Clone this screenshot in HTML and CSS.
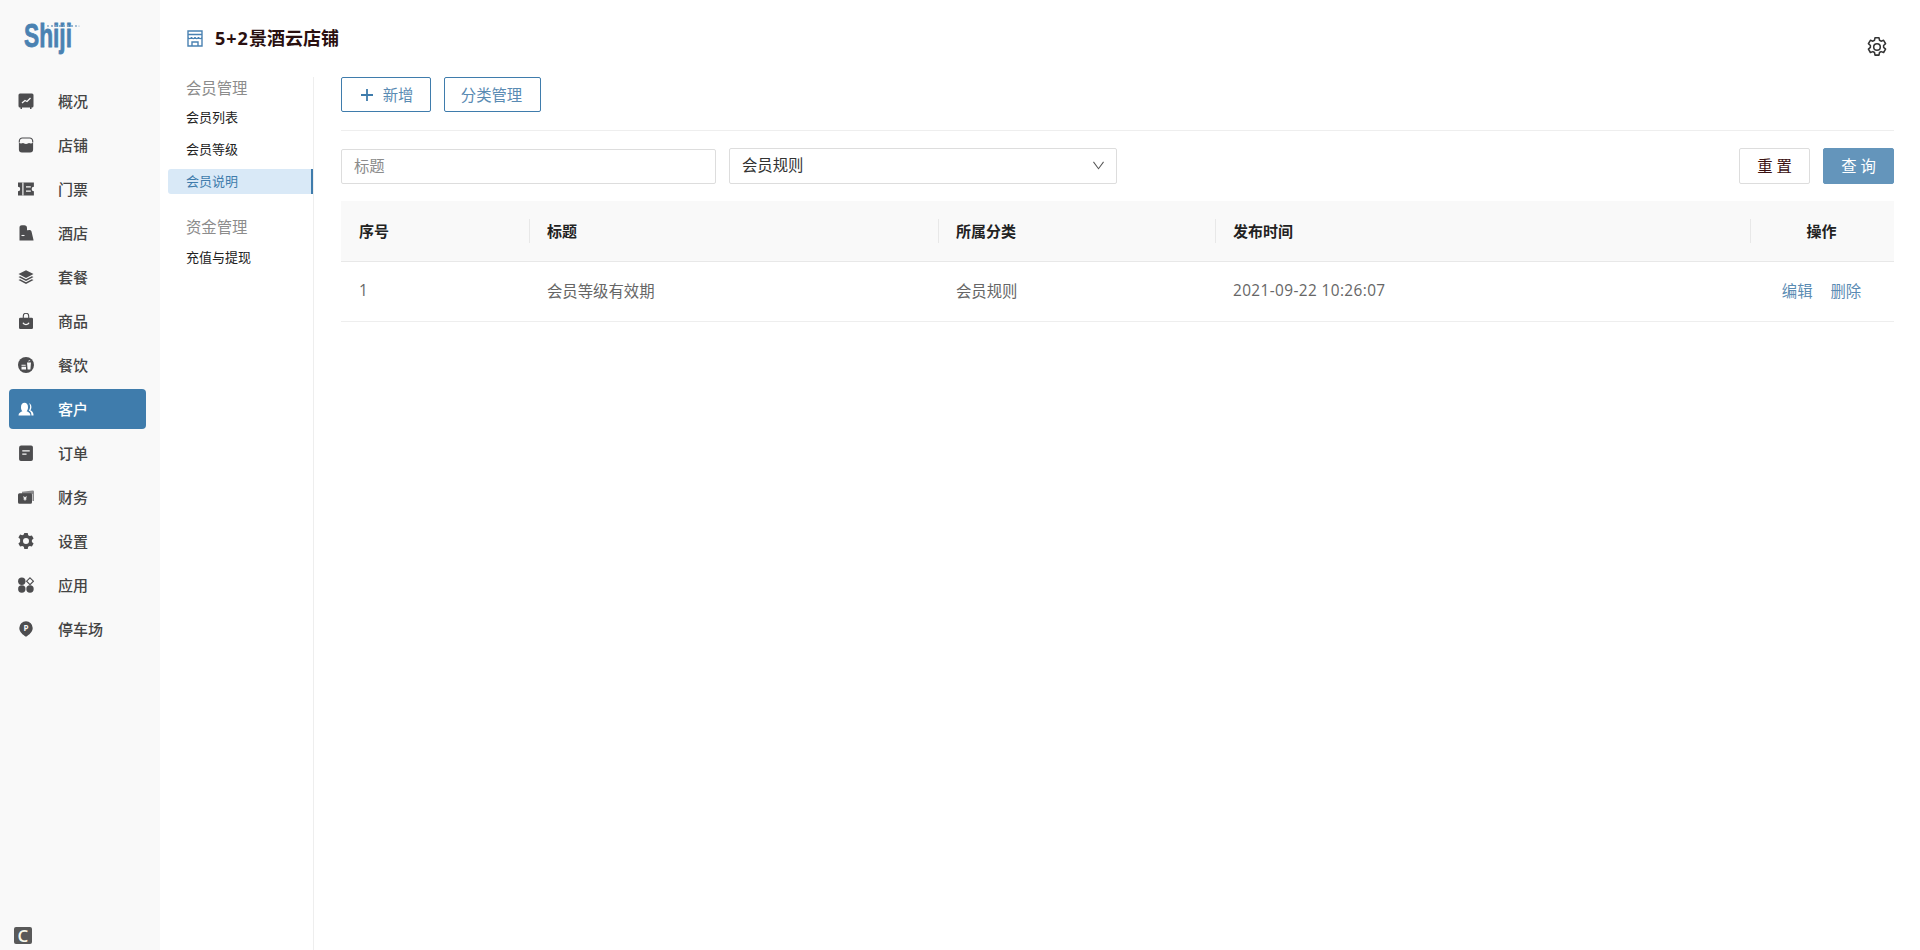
FILE: index.html
```html
<!DOCTYPE html>
<html lang="zh">
<head>
<meta charset="utf-8">
<title>会员说明</title>
<link rel="stylesheet" href="styles.css">
</head>
<body>
<div class="app">
  <aside class="sidebar">
    <div class="logo">
      <svg viewBox="0 0 60 34" width="60" height="34">
        <text class="logo-text" x="0" y="26" textLength="48" lengthAdjust="spacingAndGlyphs">Shiji</text>
        <g class="logo-dots">
          <circle cx="24" cy="5" r=".9"/><circle cx="28" cy="5" r="1.100"/><circle cx="32" cy="5" r="1.100"/><circle cx="36" cy="5" r="1.100"/><circle cx="40" cy="5" r="1.100"/><circle cx="44" cy="5" r="1.100"/><circle cx="48" cy="5" r="1.100"/><circle cx="52" cy="5" r=".9"/><circle cx="55" cy="5" r=".6"/>
        </g>
      </svg>
    </div>
    <nav class="menu">
      <a class="menu-item"><svg class="mi" viewBox="1 .5 15 16"><path d="M2.500 1h12A1.500 1.500 0 0 1 16 2.500v11a1.500 1.500 0 0 1-1.500 1.500H14v1.500h-1.500V15h-8v1.500H3V15h-.5A1.500 1.500 0 0 1 1 13.500v-11A1.500 1.500 0 0 1 2.500 1z"/><path class="cut" d="M4.500 10.500L7.500 8l2 1L13 5.500"/></svg><span>概况</span></a>
      <a class="menu-item"><svg class="mi" viewBox=".5 .5 15 16"><path class="outline" d="M1.300 6V4.500A3 3 0 0 1 4.300 1.500h7.400a3 3 0 0 1 3 3V6"/><path d="M.9 6.300c2.200 1.500 3.300.3 4.100.3.900 0 1.300.9 3 .9s2.100-.9 3-.9c.8 0 1.900 1.200 4.100-.3v6.700a3 3 0 0 1-3 3H3.900a3 3 0 0 1-3-3z"/></svg><span>店铺</span></a>
      <a class="menu-item"><svg class="mi" viewBox="1 1.500 15 13"><path d="M1 2h14.900v3.900a2.100 2.100 0 0 0 0 4.200V14H1v-3.900a2.100 2.100 0 0 0 0-4.200z"/><path class="cut thin" d="M5.600 2v12"/><path class="cut thin" d="M8.500 6h4.500M8.500 10h4.500"/></svg><span>门票</span></a>
      <a class="menu-item"><svg class="mi" viewBox="1 1 15 16"><path d="M2 16.500V3.500C2 2 3 1.300 4.300 1.300h2.400C8.500 1.300 9.500 2.300 9.500 4v2.300h.5L12 6c1 0 1.500.5 2 1.500l2 8.500v.5z"/><path class="cut thin" d="M4 11.500h3"/></svg><span>酒店</span></a>
      <a class="menu-item"><svg class="mi" viewBox="0 1 16 14"><path d="M8 1.200l7.500 3.900L8 9 .5 5.100z"/><path d="M.5 8.100l1.700-.9L8 10.200l5.800-3 1.700.9L8 12z"/><path d="M.5 11.100l1.700-.9L8 13.200l5.800-3 1.700.9L8 15z"/></svg><span>套餐</span></a>
      <a class="menu-item"><svg class="mi" viewBox="1 0 14 16"><path class="outline" d="M5.300 5.500V3a2.700 2.700 0 0 1 5.400 0v2.500"/><path d="M2.300 4.800h11.400A1.300 1.300 0 0 1 15 6.100v8.600a1.300 1.300 0 0 1-1.300 1.300H2.300A1.300 1.300 0 0 1 1 14.700V6.100a1.300 1.300 0 0 1 1.300-1.300z"/><path class="cut" d="M5 9.800c.8 2.300 5.200 2.300 6 0"/></svg><span>商品</span></a>
      <a class="menu-item"><svg class="mi" viewBox="0 0 16 16"><circle cx="8" cy="8" r="8"/><path class="fill-cut" d="M9 5.500h4l-.6 7H9.600zM10 4l2-1 .3.600-1.400.9zM3.500 7.800h4.200v1H3.500zM3.500 9.800h4.500v2.700H3.500z"/></svg><span>餐饮</span></a>
      <a class="menu-item active"><svg class="mi" viewBox="0 1 16 14"><path d="M.5 14.500c0-2.600 2.200-3.700 3.900-4.300C3.400 9.200 3 7.800 3 6.200 3 3.400 4.300 1.800 6.500 1.800S10 3.400 10 6.200c0 1.600-.4 3-1.400 4 1.800.6 3.900 1.700 3.900 4.300z"/><path d="M11 2.200c1.700.5 2.400 2 2.400 3.800 0 1.300-.4 2.500-1.100 3.300 1.400.6 3.200 1.800 3.200 4.400v.8h-2c0-2.700-1.100-4.200-2.700-5 .8-1 1.300-2.300 1.300-3.800 0-1.300-.3-2.500-1.100-3.500z"/></svg><span>客户</span></a>
      <a class="menu-item"><svg class="mi" viewBox="1 1 14 15"><path d="M3.500 1.500h9.300A1.700 1.700 0 0 1 14.500 3.200v11.100a1.700 1.700 0 0 1-1.700 1.700H3.200a1.700 1.700 0 0 1-1.700-1.700V3.500a2 2 0 0 1 2-2z"/><path class="cut thin" d="M4.500 6.500h7M4.500 9.500h4"/></svg><span>订单</span></a>
      <a class="menu-item"><svg class="mi" viewBox="0 1 16 14"><path class="soft" d="M4 2.800l10.500-1.300c.9 0 1.500.5 1.500 1.300v9.200h-1.500V5H4z"/><path d="M1.500 4.300H13a1.500 1.500 0 0 1 1 1.500v7.500a1.500 1.500 0 0 1-1.500 1.500h-11A1.500 1.500 0 0 1 0 13.300V5.800a1.500 1.500 0 0 1 1.500-1.500z"/><path class="cut thin" d="M5.500 7.500l1.500 2 1.500-2M5.500 10h3M7 9.500v2"/></svg><span>财务</span></a>
      <a class="menu-item"><svg class="mi" viewBox="0 0 16 16"><path fill-rule="evenodd" d="M6.300 0h3.400l.5 2.200 1.500.9 2.200-.7 1.700 3-1.700 1.500v2.200l1.700 1.500-1.700 3-2.200-.7-1.500.9-.5 2.200H6.300l-.5-2.200-1.500-.9-2.200.7-1.700-3 1.700-1.500V6.100L.4 4.600l1.700-3 2.200.7 1.500-.9zM8 5a3 3 0 1 0 0 6 3 3 0 0 0 0-6z"/></svg><span>设置</span></a>
      <a class="menu-item"><svg class="mi" viewBox="0 0 16 16"><circle cx="3.800" cy="4.200" r="3.700"/><circle cx="3.800" cy="12" r="3.700"/><circle cx="12" cy="12" r="3.700"/><path class="outline" d="M12 .8l3.400 3.400L12 7.600 8.600 4.200z"/></svg><span>应用</span></a>
      <a class="menu-item"><svg class="mi" viewBox="0 0 16 16"><path d="M8 .3a6.700 6.700 0 0 1 6.700 6.700c0 3.800-3.500 6.800-6.700 8.800-3.200-2-6.700-5-6.700-8.800A6.700 6.700 0 0 1 8 .3z"/><text class="pin-letter" x="8" y="10.400">P</text></svg><span>停车场</span></a>
    </nav>
    <div class="badge">C</div>
  </aside>

  <main class="main">
    <header class="topbar">
      <div class="title">
        <svg class="title-icon" viewBox="0 0 16 17"><path d="M1 1h14v15H1zM1 4.500h14M1 7c0 2.200 3.500 2.200 3.500 0 0 2.200 3.500 2.200 3.500 0 0 2.200 3.500 2.200 3.500 0 0 2.200 3.500 2.200 3.500 0M5 16v-4h6v4"/></svg>
        <h1><span class="title-num">5+2</span>景酒云店铺</h1>
      </div>
      <svg class="gear" viewBox="0 0 20 20"><path d="M8.200 1.500h3.600l.5 2.400 1.400.8 2.300-.8 1.800 3.100-1.800 1.600v1.700l1.800 1.600-1.800 3.100-2.300-.8-1.400.8-.5 2.400H8.200l-.5-2.400-1.400-.8-2.300.8-1.800-3.100 1.800-1.600V8.600L2.200 7l1.800-3.100 2.300.8 1.400-.8z"/><circle cx="10" cy="10" r="3"/></svg>
    </header>

    <div class="body">
      <nav class="subnav">
        <div class="group">
          <div class="group-title">会员管理</div>
          <a class="sub-item">会员列表</a>
          <a class="sub-item">会员等级</a>
          <a class="sub-item current">会员说明</a>
        </div>
        <div class="group">
          <div class="group-title">资金管理</div>
          <a class="sub-item">充值与提现</a>
        </div>
      </nav>

      <section class="content">
        <div class="toolbar">
          <button class="btn-outline btn-add"><svg class="plus" viewBox="0 0 12 12"><path d="M6 0v12M0 6h12"/></svg>新增</button>
          <button class="btn-outline btn-cat">分类管理</button>
        </div>

        <div class="filters">
          <div class="field input-field">标题</div>
          <div class="field select-field">
            <span>会员规则</span>
            <svg class="chevron" viewBox="0 0 12 9"><path d="M.5.5L6 8l5.500-7.500"/></svg>
          </div>
          <div class="filter-actions">
            <button class="btn btn-reset">重 置</button>
            <button class="btn btn-query">查 询</button>
          </div>
        </div>

        <table class="table">
          <colgroup>
            <col class="c1"><col class="c2"><col class="c3"><col class="c4"><col class="c5">
          </colgroup>
          <thead>
            <tr>
              <th class="first">序号</th>
              <th class="sep">标题</th>
              <th class="sep">所属分类</th>
              <th class="sep">发布时间</th>
              <th class="sep center">操作</th>
            </tr>
          </thead>
          <tbody>
            <tr>
              <td class="first">1</td>
              <td>会员等级有效期</td>
              <td>会员规则</td>
              <td class="date">2021-09-22 10:26:07</td>
              <td class="center"><a class="link">编辑</a><a class="link">删除</a></td>
            </tr>
          </tbody>
        </table>
      </section>
    </div>
  </main>
</div>
</body>
</html>
```

FILE: styles.css
```css
* { box-sizing: border-box; }
html, body { margin: 0; height: 100%; }
body {
  font-family: "Open Sans", "Noto Sans CJK SC", sans-serif;
  font-size: 15.360px;
  color: #333;
  background: #fff;
  overflow: hidden;
}
.app { display: flex; height: 950px; }

/* Sidebar */
.sidebar {
  width: 160px;
  flex: none;
  background: #f9f9f9;
  display: flex;
  flex-direction: column;
}
.logo { height: 79px; padding: 21px 0 0 24px; }
.logo svg { display: block; overflow: visible; }
.logo-text {
  font-family: "Liberation Sans", sans-serif;
  font-weight: 700;
  font-size: 34px;
  fill: #4a82b2;
  stroke: #4a82b2;
  stroke-width: .8;
}
.logo-dots { fill: #7fa6c6; }
.menu { display: flex; flex-direction: column; }
.menu-item {
  display: flex;
  align-items: center;
  width: 137px;
  height: 40px;
  margin: 2px 0 2px 9px;
  padding-left: 9px;
  border-radius: 4px;
  color: #444;
  font-size: 15px;
  font-weight: 500;
  line-height: 1;
}
.mi { width: 16px; height: 16px; margin-right: 24px; fill: #4d4d4f; flex: none; }
.mi .cut { fill: none; stroke: #f9f9f9; stroke-width: 1.300; }
.mi .cut.thin { stroke-width: 1.100; }
.mi .fill-cut { fill: #f9f9f9; }
.mi .soft { fill: #8a8a8c; }
.mi .outline { fill: none; stroke: #4d4d4f; stroke-width: 1.100; }
.pin-letter {
  font-family: "Open Sans", sans-serif;
  font-size: 8px;
  font-weight: 700;
  text-anchor: middle;
  fill: #f9f9f9;
}
.menu-item.active { background: #3f7cac; color: #fff; }
.menu-item.active .mi { fill: #fff; }
.badge {
  margin: auto 0 6px 14px;
  width: 18px;
  height: 17px;
  border-radius: 2px;
  background: #595959;
  color: #f7f7ea;
  font-family: "Open Sans", sans-serif;
  font-weight: 600;
  font-size: 17px;
  line-height: 17px;
  text-align: center;
}

/* Main */
.main { flex: 1; min-width: 0; display: flex; flex-direction: column; }
.topbar {
  height: 77px;
  flex: none;
  display: flex;
  justify-content: space-between;
  align-items: flex-start;
  padding: 0 32px 0 27px;
}
.title { display: flex; align-items: center; margin-top: 27px; height: 22px; }
.title-icon { width: 16px; height: 17px; margin-right: 12px; fill: none; stroke: #4a82b2; stroke-width: 1.400; }
.title h1 { margin: 0; font-size: 18px; line-height: 22px; font-weight: 700; color: #2a1010; }
.title-num { letter-spacing: 1px; }
.gear { width: 22px; height: 22px; margin-top: 36px; fill: none; stroke: #333; stroke-width: 1.400; stroke-linejoin: round; }

.body { flex: 1; display: flex; min-height: 0; }

/* Sub navigation */
.subnav {
  width: 154px;
  flex: none;
  padding-left: 8px;
  border-right: 1px solid #eee;
}
.group + .group { margin-top: 22px; }
.group-title {
  height: 24px;
  padding-left: 18px;
  margin-bottom: 4px;
  line-height: 24px;
  color: #8c8c8c;
}
.group + .group .group-title { margin-bottom: 5px; }
.sub-item {
  display: block;
  height: 25px;
  padding-left: 18px;
  margin-bottom: 7px;
  font-size: 13px;
  line-height: 25px;
  color: #222;
}
.sub-item.current {
  background: #d9e9f7;
  color: #3f7cac;
  border-right: 2px solid #3f7cac;
  border-radius: 3px 0 0 3px;
}

/* Content */
.content { flex: 1; min-width: 0; padding: 0 26px 0 27px; }
.toolbar {
  display: flex;
  gap: 13px;
  padding-bottom: 18px;
  border-bottom: 1px solid #eee;
}
button { font: inherit; cursor: pointer; padding: 0; }
.btn-outline {
  height: 35px;
  background: #fff;
  border: 1px solid #3f7cac;
  border-radius: 2px;
  color: #5a8bb3;
  display: flex;
  align-items: center;
  justify-content: center;
}
.btn-add { width: 90px; padding-left: 2px; }
.btn-cat { width: 97px; padding-right: 2px; }
.plus { width: 12px; height: 12px; margin-right: 10px; fill: none; stroke: #3f7cac; stroke-width: 1.800; }

.filters { display: flex; align-items: flex-start; gap: 13px; margin-top: 17px; }
.field {
  height: 35px;
  background: #fff;
  border: 1px solid #ddd;
  border-radius: 2px;
  line-height: 33px;
  padding: 0 12px;
}
.input-field { width: 375px; margin-top: 1px; color: #8c8c8c; }
.select-field { width: 388px; height: 36px; padding: 0 12px 2px; display: flex; align-items: center; justify-content: space-between; color: #333; }
.chevron { width: 11px; height: 9px; fill: none; stroke: #555; stroke-width: 1.100; }
.filter-actions { margin-left: auto; display: flex; gap: 13px; }
.btn { width: 71px; height: 36px; border-radius: 2px; padding-bottom: 2px; }
.btn-reset { background: #fff; border: 1px solid #ddd; color: #3a1010; }
.btn-query { background: #6495bb; border: 1px solid #6495bb; color: #fff; }

/* Table */
.table { width: 1553px; margin-top: 17px; border-collapse: separate; border-spacing: 0; table-layout: fixed; }
.c1 { width: 189px; }
.c2 { width: 409px; }
.c3 { width: 277px; }
.c4 { width: 535px; }
.c5 { width: 143px; }
.table th, .table td { padding: 0 0 0 17px; text-align: left; }
.table .first { padding-left: 18px; }
.table th {
  position: relative;
  height: 61px;
  padding-bottom: 1px;
  background: #f9f9f9;
  border-bottom: 1px solid #e8e8e8;
  font-weight: 700;
  color: #222;
  font-size: 15px;
}
.table th.sep::before {
  content: "";
  position: absolute;
  left: -1px;
  top: 18px;
  width: 1px;
  height: 24px;
  background: #e8e8e8;
}
.table td {
  height: 60px;
  padding-bottom: 2px;
  border-bottom: 1px solid #eee;
  color: #666;
}
.table .date { letter-spacing: .4px; }
.table .center { text-align: center; padding: 0 2px 2px 0; }
.link { color: #5a8bb3; }
.link + .link { margin-left: 18px; }
```
